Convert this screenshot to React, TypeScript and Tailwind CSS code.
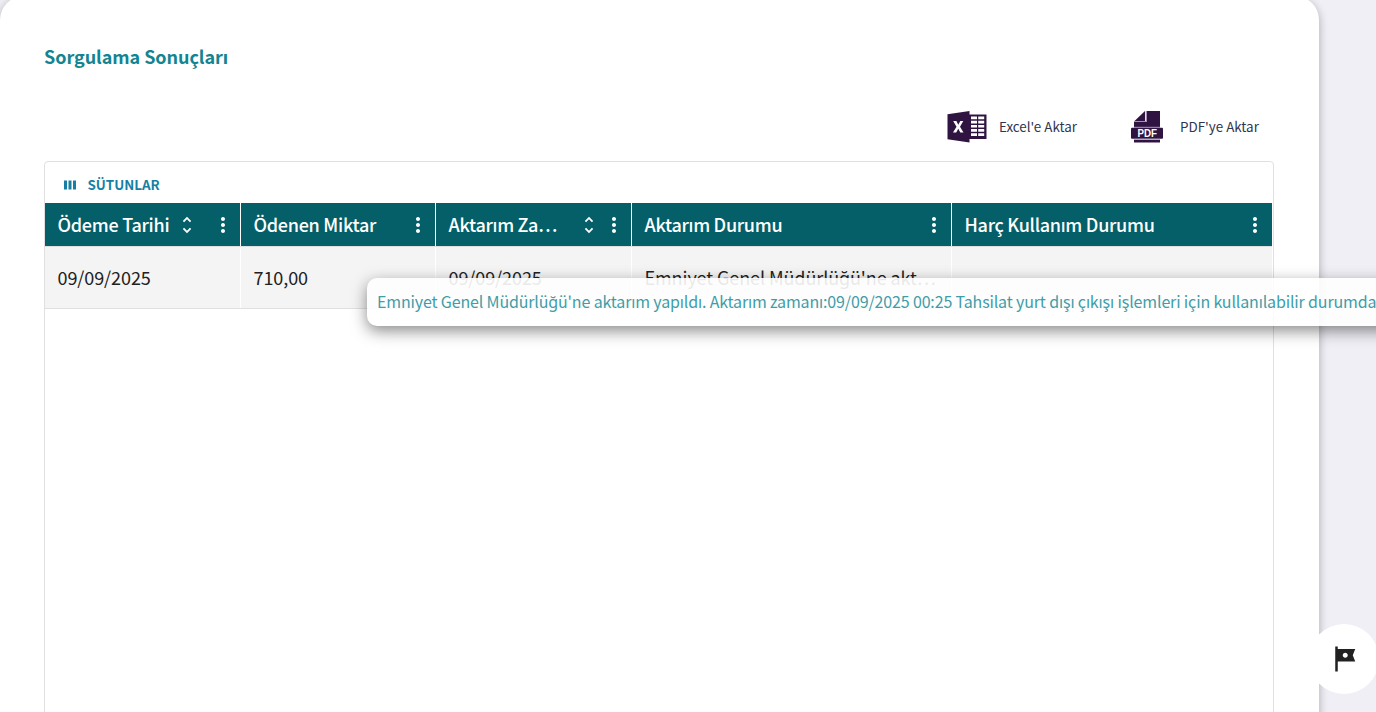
import React from "react";
import { MdMoreVert, MdTour, MdUnfoldMore } from "react-icons/md";

interface Column {
  title: string;
  value: string;
  sortable?: boolean;
  width: string;
  titleWidth: string;
}

const columns: Column[] = [
  { title: "Ödeme Tarihi", value: "09/09/2025", sortable: true, width: "w-[196px]", titleWidth: "w-[118.5px]" },
  { title: "Ödenen Miktar", value: "710,00", width: "w-[195px]", titleWidth: "w-[140px]" },
  { title: "Aktarım Za…", value: "09/09/2025", sortable: true, width: "w-[196px]", titleWidth: "w-[129.5px]" },
  { title: "Aktarım Durumu", value: "Emniyet Genel Müdürlüğü'ne akt…", width: "w-[320px]", titleWidth: "w-[200px]" },
  { title: "Harç Kullanım Durumu", value: "", width: "w-[320px]", titleWidth: "w-[220px]" },
];

const ExcelIcon: React.FC = () => (
  <svg width="40" height="32" viewBox="0 0 40 32">
    <path d="M.5 3.2 22.5 0v31.500L.5 28.200z" fill="#2f1442" />
    <path d="M22 3.500h17.500v24.500H22z" fill="#2f1442" />
    <path
      d="M24 5.500h6v2.700h-6zM31.200 5.500h6v2.700h-6zM24 9.700h6v2.700h-6zM31.200 9.700h6v2.700h-6zM24 13.900h6v2.700h-6zM31.200 13.900h6v2.700h-6zM24 18.100h6v2.700h-6zM31.200 18.100h6v2.700h-6zM24 22.300h6v2.700h-6zM31.200 22.300h6v2.700h-6z"
      fill="#fff"
    />
    <path d="M6.200 10h3.200l1.900 3.700 2-3.700h3L13 15.700l3.500 5.900h-3.200l-2-3.800-2.100 3.800H6l3.500-5.900z" fill="#fff" />
  </svg>
);

const PdfIcon: React.FC = () => (
  <svg width="32" height="32" viewBox="0 0 32 32">
    <path d="M15.500 0H29v16H3V11h12.500z" fill="#2f1442" />
    <path d="M14 0v10H3.500z" fill="#2f1442" />
    <path d="M15.300 0v10.500H3" fill="none" stroke="#a493b0" strokeWidth="1.2" />
    <path d="M3 16.300h26" stroke="#a493b0" />
    <rect y="16.800" width="32" height="11" rx="1" fill="#2f1442" />
    <path d="M3 28.300h26" stroke="#a493b0" />
    <path d="M3 29h26v2.500H3z" fill="#2f1442" />
    <text
      x="16.200"
      y="26"
      textAnchor="middle"
      textLength="19.500"
      lengthAdjust="spacingAndGlyphs"
      fontFamily="Liberation Sans, sans-serif"
      fontSize="10"
      fontWeight="bold"
      fill="#fff"
    >
      PDF
    </text>
  </svg>
);

const ColumnsIcon: React.FC = () => (
  <svg width="12" height="10" viewBox="0 0 12 10" fill="currentColor">
    <path d="M0 .4h3v9.200H0zM4.500 .4h3v9.200h-3zM9 .4h3v9.200H9z" />
  </svg>
);

const HeaderCell: React.FC<{ column: Column }> = ({ column }: { column: Column }) => (
  <div className={`${column.width} flex h-[43px] shrink-0 items-center border-r border-white pl-[12.5px] pr-[5.5px] last:border-r-0`}>
    <span className={`${column.titleWidth} text-[18px] font-medium tracking-[-0.28px] whitespace-nowrap`}>{column.title}</span>
    {column.sortable && <MdUnfoldMore size={22} />}
    <MdMoreVert size={24} className="ml-auto" />
  </div>
);

const App: React.FC = () => {
  return (
    <div className="relative h-[712px] w-[1376px] overflow-hidden bg-[#f0eff6] font-['Noto_Sans_CJK_SC','Noto_Sans',sans-serif]">
      <main className="-mt-1 h-[760px] w-[1319px] rounded-[24px] bg-white pt-[45px] pr-[45px] pl-11 shadow-[0_3px_10px_rgba(0,0,0,0.3)]">
        <h1 className="h-[30px] text-[18px] leading-[30px] font-bold tracking-[-0.06px] text-[#138490]">Sorgulama Sonuçları</h1>

        <div className="mt-[31px] flex h-[50px] items-center justify-end pr-[15px] text-[13.4px] text-[#303650]">
          <ExcelIcon />
          <span className="ml-3 w-[132px] pb-[2px]">Excel'e Aktar</span>
          <PdfIcon />
          <span className="ml-[17px] w-[79px] pb-[2px] whitespace-nowrap">PDF'ye Aktar</span>
        </div>

        <section className="mt-[9px] h-[620px] rounded-[4px] border border-[#e0e0e0]">
          <div className="flex h-[41px] items-center pt-[4px] pl-[19px] text-[13.4px] font-bold text-[#177fa4]">
            <ColumnsIcon />
            <span className="ml-[11.5px]">SÜTUNLAR</span>
          </div>
          <div className="flex w-[1227px] bg-[#045f69] text-white">
            {columns.map((column) => (
              <HeaderCell key={column.title} column={column} />
            ))}
          </div>
          <div className="flex h-[63px] w-[1227px] border-y border-[#e0e0e0] bg-[#f4f4f4] text-[#212121]">
            {columns.map((column) => (
              <div
                key={column.title}
                className={`${column.width} flex shrink-0 items-center border-r border-white pl-[12.5px] text-[18px] tracking-[-0.08px] whitespace-nowrap last:border-r-0`}
              >
                {column.value}
              </div>
            ))}
          </div>
        </section>
      </main>

      <div className="absolute top-[278px] left-[367px] flex h-12 w-[1100px] items-center rounded-[10px] bg-white pb-[2px] pl-[10px] text-[16px] tracking-[-0.148px] whitespace-nowrap text-[#2b949f] opacity-90 shadow-[0_5px_15px_rgba(0,0,0,0.5)]">
        Emniyet Genel Müdürlüğü'ne aktarım yapıldı. Aktarım zamanı:09/09/2025 00:25 Tahsilat yurt dışı çıkışı işlemleri için kullanılabilir durumda
      </div>

      <button className="absolute top-[624px] left-[1309px] flex h-[70px] w-[70px] items-center justify-center rounded-full bg-white text-[#212121]">
        <MdTour size={30} />
      </button>
    </div>
  );
};

export default App;
